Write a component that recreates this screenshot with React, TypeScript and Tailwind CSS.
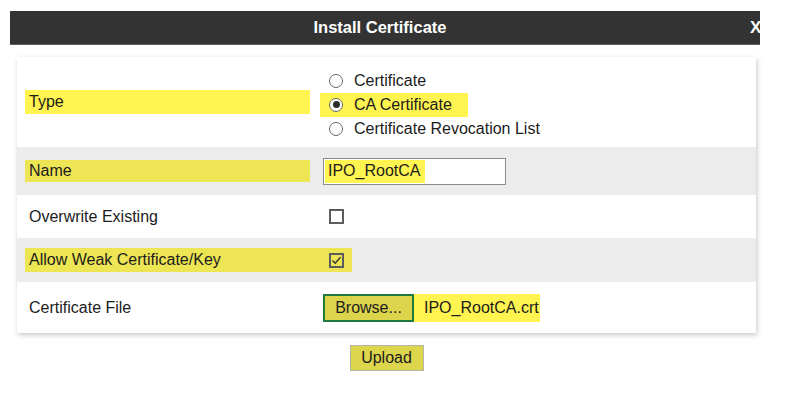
const FONT = { fontFamily: '"Liberation Sans", Arial, sans-serif' };

function Radio({ checked }: { checked?: boolean }) {
  return (
    <span className="w-[14px] h-[14px] rounded-full border border-[#666] bg-white flex items-center justify-center shrink-0">
      {checked && <span className="w-[7px] h-[7px] rounded-full bg-[#2b2b2b]" />}
    </span>
  );
}

function Checkbox({ checked }: { checked?: boolean }) {
  return (
    <span className="w-[15px] h-[15px] border-2 border-[#5c5c5c] bg-transparent flex items-center justify-center shrink-0">
      {checked && (
        <svg width="11" height="11" viewBox="0 0 11 11" fill="none">
          <path d="M1.5 5.5 L4.2 8.2 L9.5 2.2" stroke="#333" strokeWidth="1.4" />
        </svg>
      )}
    </span>
  );
}

const types = [
  { label: 'Certificate', checked: false },
  { label: 'CA Certificate', checked: true },
  { label: 'Certificate Revocation List', checked: false },
];

export default function App() {
  return (
    <div className="w-[786px] h-[399px] bg-white text-[16px] text-[#1c1c1c] overflow-hidden" style={FONT}>
      {/* Title bar */}
      <div className="ml-[10px] mt-[11px] w-[750px] h-[34px] bg-[#333333] border-b border-[#5e5e5e] flex items-center overflow-hidden">
        <div className="flex-1 text-center text-white font-bold text-[16.5px]">Install Certificate</div>
        <span className="w-[10px] shrink-0 overflow-hidden text-white font-bold text-[17px] leading-none">X</span>
      </div>

      {/* Form panel */}
      <div className="ml-[17px] mt-[12px] w-[739px] bg-white shadow-[1px_2px_5px_rgba(0,0,0,0.22)]">
        {/* Type */}
        <div className="h-[90px] flex items-center">
          <div className="w-[306px] pl-[8px]">
            <div className="w-[285px] h-[24px] pl-[4px] bg-[#fff450] flex items-center">Type</div>
          </div>
          <div className="flex flex-col pt-[5px]">
            {types.map(t => (
              <div
                key={t.label}
                className={`h-[24px] w-fit -ml-[3px] pl-[9px] pr-[16px] flex items-center gap-[11px] ${
                  t.checked ? 'bg-[#fff450]' : ''
                }`}
              >
                <Radio checked={t.checked} />
                <span>{t.label}</span>
              </div>
            ))}
          </div>
        </div>

        {/* Name */}
        <div className="h-[48px] bg-[#ececec] flex items-center">
          <div className="w-[306px] pl-[8px]">
            <div className="w-[285px] h-[22px] pl-[4px] bg-[#ede553] flex items-center">Name</div>
          </div>
          <div className="w-[183px] h-[27px] border border-[#8c8c8c] bg-white p-[1px] flex">
            <div className="w-[100px] pl-[3px] bg-[#fff450] flex items-center">IPO_RootCA</div>
          </div>
        </div>

        {/* Overwrite */}
        <div className="h-[43px] flex items-center">
          <div className="w-[312px] pl-[12px]">Overwrite Existing</div>
          <Checkbox />
        </div>

        {/* Allow weak */}
        <div className="h-[44px] bg-[#ececec] flex items-center pl-[8px]">
          <div className="w-[327px] h-[24px] bg-[#ede553] flex items-center">
            <div className="w-[304px] pl-[4px]">Allow Weak Certificate/Key</div>
            <Checkbox checked />
          </div>
        </div>

        {/* Certificate file */}
        <div className="h-[51px] flex items-center">
          <div className="w-[306px] pl-[12px]">Certificate File</div>
          <div className="w-[217px] h-[28px] bg-[#fff450] flex items-center">
            <button className="w-[91px] h-[28px] border-2 border-[#1f7a3f] bg-[#dcd54c] text-[16px] text-[#1c1c1c]">
              Browse...
            </button>
            <span className="pl-[10px]">IPO_RootCA.crt</span>
          </div>
        </div>
      </div>

      {/* Upload */}
      <div className="ml-[17px] w-[739px] mt-[12px] flex justify-center">
        <button className="w-[74px] h-[26px] bg-[#ddd54b] border border-[#b4b4a8] text-[16px] text-[#1c1c1c]">
          Upload
        </button>
      </div>
    </div>
  );
}
